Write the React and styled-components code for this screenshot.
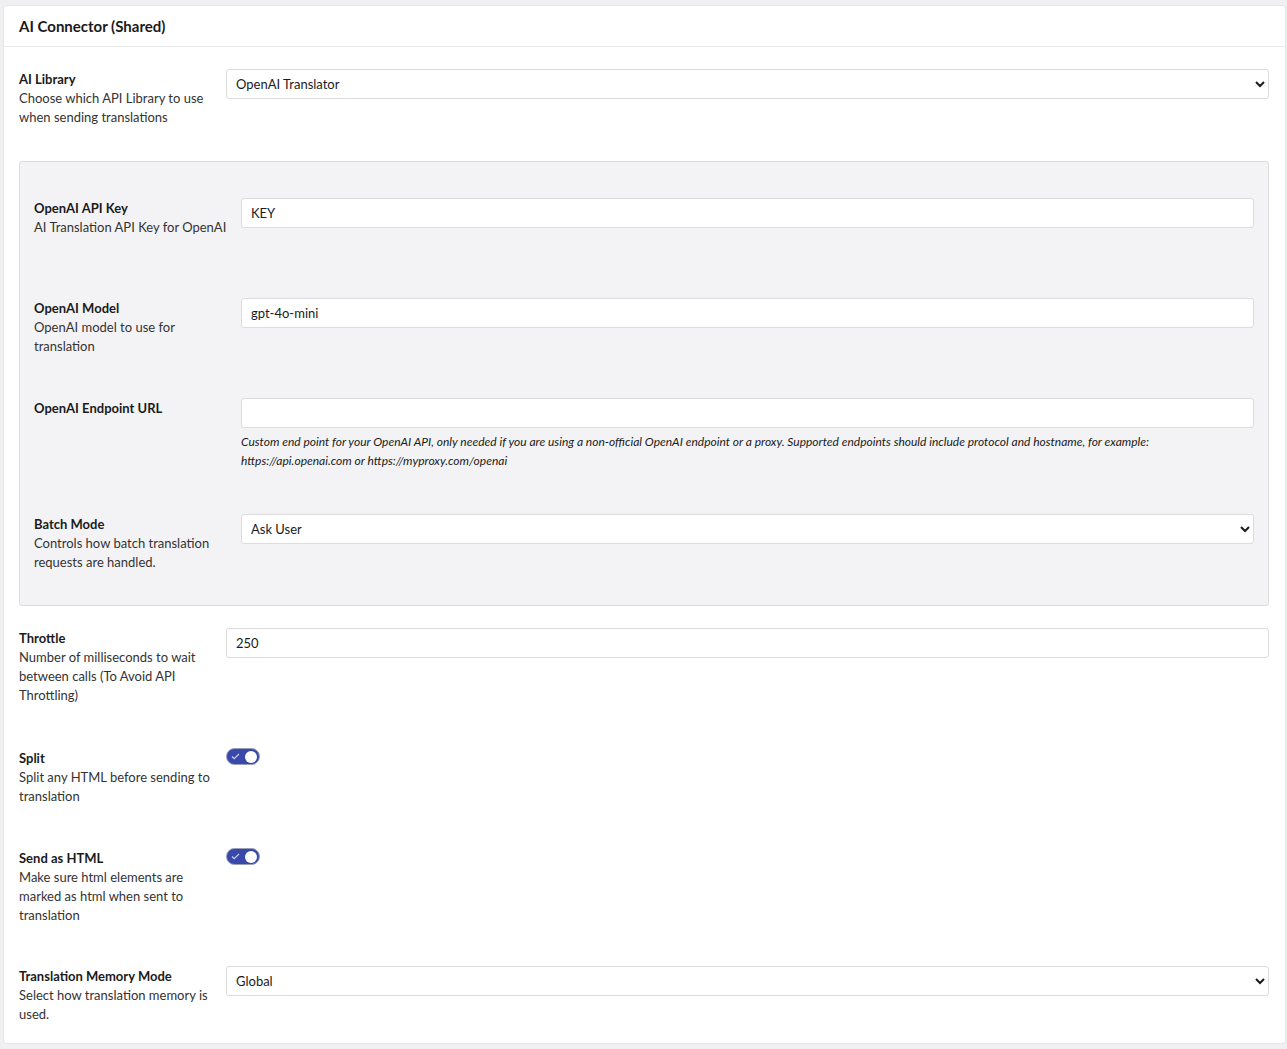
import React from "react";
import styled, { createGlobalStyle } from "styled-components";

const G = createGlobalStyle`
  body { margin:0; background:#f0f0f2; font-family: Lato, "Noto Sans", sans-serif; color:#1b1b1b; }
`;
const Card = styled.div`
  margin:5px 1px 4px 3px; background:#fff; border:1px solid #e6e6e8; border-radius:3px;
`;
const Header = styled.div`
  height:40px; border-bottom:1px solid #e9e9ec; display:flex; align-items:center; padding-left:15px;
  font-size:15px; font-weight:700; color:#1b1b1b;
`;
const Body = styled.div`padding:22px 16px 0 15px;`;
const Row = styled.div`display:flex; height:${p=>p.h}px;`;
const Label = styled.div`width:207px; flex:none; padding-top:1px; font-size:13px; line-height:19px; color:#333; padding-right:10px; box-sizing:border-box;`;
const Title = styled.div`font-weight:700; color:#1b1b1b;`;
const Ctrl = styled.div`flex:1; min-width:0;`;
const Input = styled.input`
  width:100%; box-sizing:border-box; height:30px; border:1px solid #dcdcdf; border-radius:3px;
  padding:0 9px; font: 13px Lato, sans-serif; color:#1b1b1b; background:#fff;
`;
const Select = styled.select`
  width:100%; box-sizing:border-box; height:30px; border:1px solid #dcdcdf; border-radius:3px;
  padding:0 5px; font: 13px Lato, sans-serif; color:#1b1b1b; background:#fff;
`;
const Box = styled.div`
  background:#f3f3f5; border:1px solid #dcdcdf; border-radius:3px; padding:36px 14px 0 14px; margin:0 0 22px;
`;
const Help = styled.div`font-size:12px; font-style:italic; line-height:19px; margin-top:4px; color:#1b1b1b;`;
const Toggle = styled.div`
  width:34px; height:17px; border-radius:9px; background:#3949ab; border:1px solid #9aa0b8; box-sizing:border-box;
  position:relative; display:flex; align-items:center; padding-left:4px;
  &::after{content:""; position:absolute; right:2px; top:1.5px; width:12px; height:12px; border-radius:50%; background:#fff;}
`;

const L = ({t,d}) => <Label><Title>{t}</Title>{d}</Label>;
const Tg = () => <Toggle><svg width="9" height="7" viewBox="0 0 9 7"><path d="M1 3.5l2.2 2.2L8 1" stroke="#c8cdf0" strokeWidth="1.2" fill="none"/></svg></Toggle>;

export default function App(){
  return <><G/><Card>
    <Header>AI Connector (Shared)</Header>
    <Body>
      <Row h={92}><L t="AI Library" d="Choose which API Library to use when sending translations"/><Ctrl><Select><option>OpenAI Translator</option></Select></Ctrl></Row>
      <Box>
        <Row h={100}><L t="OpenAI API Key" d="AI Translation API Key for OpenAI"/><Ctrl><Input defaultValue="KEY"/></Ctrl></Row>
        <Row h={100}><L t="OpenAI Model" d="OpenAI model to use for translation"/><Ctrl><Input defaultValue="gpt-4o-mini"/></Ctrl></Row>
        <Row h={116}><L t="OpenAI Endpoint URL"/><Ctrl><Input/><Help>Custom end point for your OpenAI API, only needed if you are using a non-official OpenAI endpoint or a proxy. Supported endpoints should include protocol and hostname, for example: https://api.openai.com or https://myproxy.com/openai</Help></Ctrl></Row>
        <Row h={91}><L t="Batch Mode" d="Controls how batch translation requests are handled."/><Ctrl><Select><option>Ask User</option></Select></Ctrl></Row>
      </Box>
      <Row h={120}><L t="Throttle" d="Number of milliseconds to wait between calls (To Avoid API Throttling)"/><Ctrl><Input defaultValue="250"/></Ctrl></Row>
      <Row h={100}><L t="Split" d="Split any HTML before sending to translation"/><Ctrl><Tg/></Ctrl></Row>
      <Row h={118}><L t="Send as HTML" d="Make sure html elements are marked as html when sent to translation"/><Ctrl><Tg/></Ctrl></Row>
      <Row h={77}><L t="Translation Memory Mode" d="Select how translation memory is used."/><Ctrl><Select><option>Global</option></Select></Ctrl></Row>
    </Body>
  </Card></>;
}
